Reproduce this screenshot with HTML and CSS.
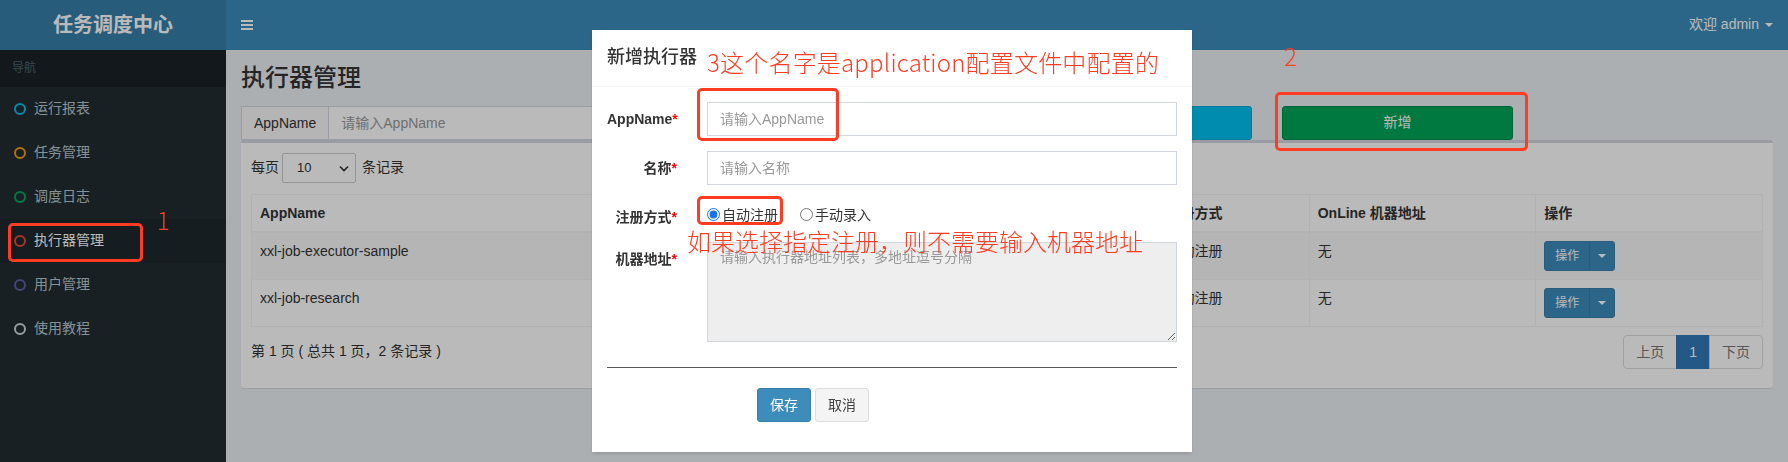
FILE: index.html
```html
<!DOCTYPE html>
<html lang="zh-CN">
<head>
<meta charset="utf-8">
<title>任务调度中心</title>
<link rel="stylesheet" href="styles.css">
</head>
<body>
<div class="wrapper">
  <div class="logo">任务调度中心</div>
  <nav class="navbar">
    <span class="toggle">
      <svg width="12" height="10" viewBox="0 0 12 10"><rect x="0" y="0" width="12" height="2"/><rect x="0" y="4" width="12" height="2"/><rect x="0" y="8" width="12" height="2"/></svg>
    </span>
    <span class="user">欢迎 admin <i class="caret"></i></span>
  </nav>
  <aside class="sidebar">
    <div class="nav-header">导航</div>
    <ul class="menu">
      <li><i class="ring aqua"></i>运行报表</li>
      <li><i class="ring yellow"></i>任务管理</li>
      <li><i class="ring green"></i>调度日志</li>
      <li class="active"><i class="ring red"></i>执行器管理</li>
      <li><i class="ring purple"></i>用户管理</li>
      <li><i class="ring gray"></i>使用教程</li>
    </ul>
  </aside>
  <main class="content-wrapper">
    <div class="content-header"><h1>执行器管理</h1></div>
    <section class="content">
      <div class="search-row">
        <div class="col-3">
          <div class="input-group">
            <span class="addon">AppName</span>
            <span class="form-control placeholder">请输入AppName</span>
          </div>
        </div>
        <div class="col-3">
          <div class="input-group">
            <span class="addon">名称</span>
            <span class="form-control placeholder">请输入名称</span>
          </div>
        </div>
        <div class="col-2"><span class="btn btn-info">搜索</span></div>
        <div class="col-2"><span class="btn btn-success">新增</span></div>
      </div>
      <div class="box">
        <div class="box-body">
          <div class="length">
            <span>每页</span>
            <span class="select">10
              <svg width="10" height="7" viewBox="0 0 10 7"><path d="M1 1.5 L5 5.5 L9 1.5" fill="none" stroke="#333" stroke-width="1.6"/></svg>
            </span>
            <span>条记录</span>
          </div>
          <table class="table">
            <thead>
              <tr>
                <th class="w30">AppName</th>
                <th class="w30">名称</th>
                <th class="w10">注册方式</th>
                <th class="w15">OnLine 机器地址</th>
                <th class="w15">操作</th>
              </tr>
            </thead>
            <tbody>
              <tr>
                <td>xxl-job-executor-sample</td>
                <td>示例执行器</td>
                <td>自动注册</td>
                <td>无</td>
                <td><span class="btn-group"><span class="btn-sm">操作</span><span class="btn-sm toggle-btn"><i class="caret"></i></span></span></td>
              </tr>
              <tr>
                <td>xxl-job-research</td>
                <td>研究执行器</td>
                <td>自动注册</td>
                <td>无</td>
                <td><span class="btn-group"><span class="btn-sm">操作</span><span class="btn-sm toggle-btn"><i class="caret"></i></span></span></td>
              </tr>
            </tbody>
          </table>
          <div class="table-footer">
            <div class="info">第 1 页 ( 总共 1 页，2 条记录 )</div>
            <ul class="pagination">
              <li>上页</li>
              <li class="active">1</li>
              <li>下页</li>
            </ul>
          </div>
        </div>
      </div>
    </section>
  </main>
</div>

<div class="backdrop"></div>

<div class="modal">
  <div class="modal-content">
    <div class="modal-header"><h4 class="modal-title">新增执行器</h4></div>
    <div class="modal-body">
      <form class="form">
        <div class="form-group">
          <label class="control-label">AppName<span class="req">*</span></label>
          <input class="input" type="text" placeholder="请输入AppName">
        </div>
        <div class="form-group">
          <label class="control-label">名称<span class="req">*</span></label>
          <input class="input" type="text" placeholder="请输入名称">
        </div>
        <div class="form-group">
          <label class="control-label">注册方式<span class="req">*</span></label>
          <div class="radios">
            <label class="radio"><input type="radio" name="addressType" checked>自动注册</label>
            <label class="radio"><input type="radio" name="addressType">手动录入</label>
          </div>
        </div>
        <div class="form-group">
          <label class="control-label">机器地址<span class="req">*</span></label>
          <textarea class="textarea" readonly placeholder="请输入执行器地址列表，多地址逗号分隔"></textarea>
        </div>
        <hr class="divider">
        <div class="form-actions">
          <button type="button" class="mbtn primary">保存</button>
          <button type="button" class="mbtn default">取消</button>
        </div>
      </form>
    </div>
  </div>
</div>

<div class="annotations">
  <div class="mark box1"></div>
  <div class="note n1">1</div>
  <div class="mark box2"></div>
  <div class="note n2">2</div>
  <div class="mark box3"></div>
  <div class="note n3">3这个名字是application配置文件中配置的</div>
  <div class="mark box4"></div>
  <div class="note n4">如果选择指定注册，则不需要输入机器地址</div>
</div>
</body>
</html>
```

FILE: styles.css
```css
* { box-sizing: border-box; }
html, body { margin: 0; height: 100%; }
body {
  font-family: "Liberation Sans", "Noto Sans CJK SC", sans-serif;
  font-size: 14px;
  line-height: 1.42857;
  color: #333;
  background: #ecf0f5;
  overflow: hidden;
}

.wrapper {
  display: grid;
  grid-template-columns: 226px 1fr;
  grid-template-rows: 50px 1fr;
  height: 100vh;
}

/* header */
.logo {
  background: #367fa9;
  color: #fff;
  font-size: 20px;
  font-weight: bold;
  text-align: center;
  line-height: 50px;
}
.navbar {
  background: #3c8dbc;
  color: #fff;
  display: flex;
  align-items: center;
  justify-content: space-between;
  padding: 0 15px;
}
.toggle { display: flex; }
.toggle svg { fill: #fff; }
.user { display: flex; align-items: center; gap: 6px; }
.caret {
  display: inline-block;
  width: 0; height: 0;
  border-top: 4px solid #fff;
  border-left: 4px solid transparent;
  border-right: 4px solid transparent;
}

/* sidebar */
.sidebar { background: #222d32; }
.nav-header {
  background: #1a2226;
  color: #4b646f;
  font-size: 12px;
  height: 37px;
  line-height: 17px;
  padding: 10px 12px;
}
.menu { list-style: none; margin: 0; padding: 0; }
.menu li {
  height: 44px;
  display: flex;
  align-items: center;
  gap: 8px;
  padding-left: 14px;
  color: #b8c7ce;
}
.menu li.active { background: #1e282c; color: #fff; }
.ring {
  width: 12px; height: 12px;
  border-radius: 50%;
  border: 2px solid;
}
.aqua { border-color: #00c0ef; }
.yellow { border-color: #f39c12; }
.green { border-color: #00a65a; }
.red { border-color: #dd4b39; }
.purple { border-color: #605ca8; }
.gray { border-color: #d2d6de; }

/* content */
.content-wrapper { background: #ecf0f5; }
.content-header { padding: 15px 15px 0; }
.content-header h1 {
  margin: 0;
  font-size: 24px;
  line-height: 26.4px;
  font-weight: 500;
  color: #333;
}
.content { padding: 15px; }
.search-row {
  display: grid;
  grid-template-columns: repeat(12, 1fr);
  column-gap: 30px;
}
.col-3 { grid-column: span 3; }
.col-2 { grid-column: span 2; }
.input-group { display: flex; height: 34px; }
.addon {
  padding: 6px 12px;
  border: 1px solid #d2d6de;
  border-right: 0;
  background: #f8f8f8;
  line-height: 20px;
}
.form-control {
  flex: 1;
  padding: 6px 12px;
  border: 1px solid #d2d6de;
  background: #fff;
  line-height: 20px;
}
.placeholder { color: #999; }
.btn {
  display: flex;
  align-items: center;
  justify-content: center;
  height: 34px;
  border-radius: 3px;
  border: 1px solid;
  color: #fff;
}
.btn-info { background: #00c0ef; border-color: #00acd6; }
.btn-success { background: #00a65a; border-color: #008d4c; }

.box {
  background: #fff;
  border-top: 3px solid #d2d6de;
  border-radius: 3px;
  box-shadow: 0 1px 1px rgba(0,0,0,0.1);
}
.box-body { padding: 10px 10px 19px; }
.length { display: flex; align-items: center; height: 30px; }
.select {
  display: flex;
  align-items: center;
  justify-content: space-between;
  width: 74px;
  height: 30px;
  margin: 0 6px 0 3px;
  padding: 0 6px 0 14px;
  border: 1px solid #ccc;
  border-radius: 2px;
  font-size: 13px;
  background: #fff;
}

.table {
  width: 100%;
  margin-top: 11px;
  border-collapse: collapse;
  table-layout: fixed;
  border: 1px solid #f4f4f4;
}
.table th, .table td {
  padding: 8px;
  border: 1px solid #f4f4f4;
  text-align: left;
  vertical-align: top;
  line-height: 20px;
  white-space: nowrap;
  overflow: hidden;
}
.table thead th { border-bottom-width: 2px; font-weight: bold; }
.table tbody tr:nth-child(odd) { background: #f9f9f9; }
.w30 { width: 30%; }
.w10 { width: 10%; }
.w15 { width: 15%; }

.btn-group { display: inline-flex; height: 30px; }
.btn-sm {
  display: flex;
  align-items: center;
  padding: 0 10px;
  font-size: 12px;
  color: #fff;
  background: #3c8dbc;
  border: 1px solid #367fa9;
  border-radius: 3px 0 0 3px;
}
.btn-sm.toggle-btn {
  padding: 0 8px;
  margin-left: -1px;
  border-radius: 0 3px 3px 0;
}

.table-footer {
  display: flex;
  justify-content: space-between;
  align-items: flex-start;
  margin-top: 6px;
}
.info { padding-top: 8px; line-height: 20px; }
.pagination {
  display: flex;
  list-style: none;
  margin: 2px 0 0;
  padding: 0;
}
.pagination li {
  padding: 6px 12px;
  line-height: 20px;
  border: 1px solid #ddd;
  margin-left: -1px;
  color: #777;
  background: #fff;
}
.pagination li:first-child { border-radius: 4px 0 0 4px; margin-left: 0; }
.pagination li:last-child { border-radius: 0 4px 4px 0; }
.pagination li.active { background: #337ab7; border-color: #337ab7; color: #fff; }

/* modal */
.backdrop {
  position: fixed;
  inset: 0;
  background: rgba(0,0,0,0.27);
}
.modal {
  position: fixed;
  inset: 0;
  padding-right: 4px;
}
.modal-content {
  width: 600px;
  margin: 30px auto 0;
  background: #fff;
  box-shadow: 0 2px 3px rgba(0,0,0,0.125);
}
.modal-header {
  padding: 15px;
  border-bottom: 1px solid #f4f4f4;
}
.modal-title {
  margin: 0;
  font-size: 18px;
  font-weight: 500;
  line-height: 1.42857;
  color: #333;
}
.modal-body { padding: 15px; }
.form { display: flex; flex-direction: column; margin: 0; }
.form-group {
  display: grid;
  grid-template-columns: calc((100% + 30px) / 6 - 30px) 1fr;
  column-gap: 30px;
  margin-bottom: 15px;
}
.control-label {
  text-align: right;
  font-weight: bold;
  padding-top: 7px;
  line-height: 20px;
}
.req { color: red; }
.input {
  height: 34px;
  padding: 6px 12px;
  border: 1px solid #d2d6de;
  border-radius: 0;
  font: inherit;
  color: #555;
  outline: none;
}
.input::placeholder, .textarea::placeholder { color: #999; }
.radios { display: flex; align-items: center; padding-top: 3px; height: 27px; }
.radio { display: flex; align-items: center; line-height: 20px; }
.radio + .radio { margin-left: 22px; }
.radio input { margin: 0 2px 0 0; width: 13px; height: 13px; accent-color: #1a73e8; }
.textarea {
  height: 100px;
  padding: 4px 12px;
  border: 1px solid #d2d6de;
  border-radius: 0;
  background: #eee;
  font: inherit;
  line-height: 20px;
  resize: vertical;
  outline: none;
}
.divider {
  width: 100%;
  margin: 10px 0 20px;
  border: 0;
  border-top: 1px solid #555;
  height: 0;
}
.form-actions {
  display: flex;
  gap: 4px;
  padding-left: calc((100% + 30px) / 4);
  margin-bottom: 15px;
}
.mbtn {
  height: 34px;
  padding: 6px 12px;
  font: inherit;
  line-height: 20px;
  border-radius: 3px;
  border: 1px solid;
}
.mbtn.primary { background: #3c8dbc; border-color: #367fa9; color: #fff; }
.mbtn.default { background: #f4f4f4; border-color: #ddd; color: #444; }

/* screenshot annotations */
.annotations {
  position: fixed;
  inset: 0;
  pointer-events: none;
}
.mark {
  position: absolute;
  border: 3px solid #ff3b22;
  border-radius: 5px;
}
.box1 { left: 8px; top: 223px; width: 135px; height: 39px; }
.box2 { left: 1275px; top: 92px; width: 253px; height: 59px; }
.box3 { left: 697px; top: 88px; width: 142px; height: 53px; }
.box4 { left: 697px; top: 196px; width: 86px; height: 29px; }
.note {
  position: absolute;
  color: #ff3b22;
  font-family: "Noto Sans CJK SC", "Liberation Sans", sans-serif;
  font-weight: 300;
  font-size: 24px;
  line-height: 30px;
  white-space: nowrap;
}
.n1 { left: 157px; top: 205px; }
.n2 { left: 1284px; top: 41px; }
.n3 { left: 707px; top: 47px; letter-spacing: 0.2px; }
.n4 { left: 687px; top: 226px; }
```
